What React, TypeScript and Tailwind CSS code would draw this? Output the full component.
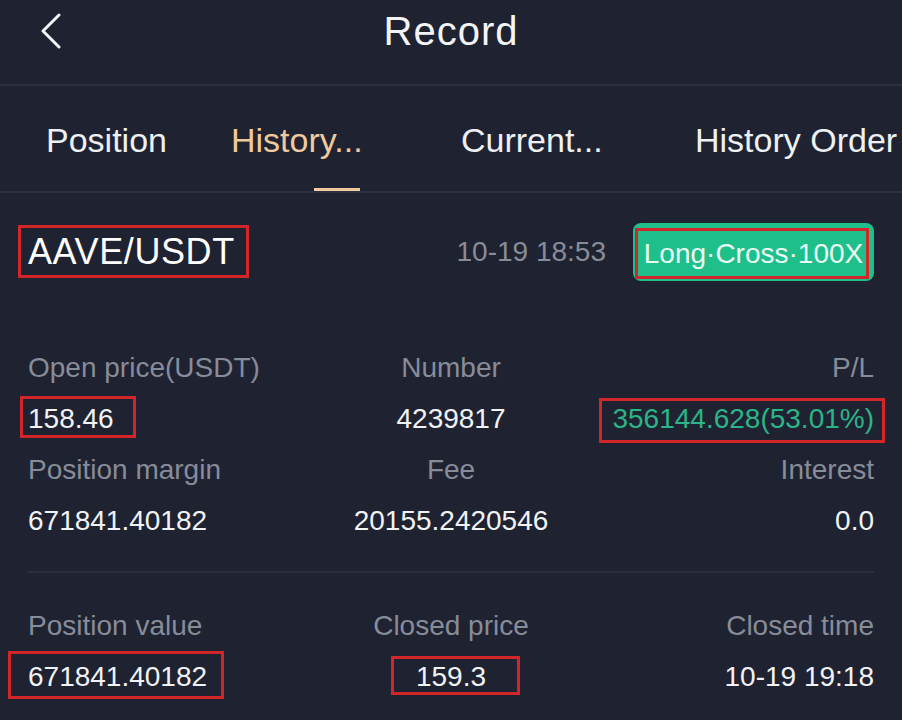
import React from 'react';

const FONT = { fontFamily: "'Liberation Sans', Arial, sans-serif" };

type Mark = { l: number; r: number; t: number; b: number };

// red annotation frame drawn over a piece of text
const Marked: React.FC<{ mark?: Mark; children: React.ReactNode }> = ({ mark, children }) => (
  <span className="relative inline-block leading-[32px] align-middle">
    {children}
    {mark && (
      <span
        className="absolute border-[3px] border-[#d3262b] pointer-events-none"
        style={{ left: -mark.l, right: -mark.r, top: -mark.t, bottom: -mark.b }}
      />
    )}
  </span>
);

type Cell = { label: string; value: string; tone?: 'green'; mark?: Mark };

const ROWS: Cell[][] = [
  [
    { label: 'Open price(USDT)', value: '158.46', mark: { l: 8, r: 22, t: 7, b: 3 } },
    { label: 'Number', value: '4239817' },
    { label: 'P/L', value: '356144.628(53.01%)', tone: 'green', mark: { l: 13, r: 11, t: 5, b: 8 } },
  ],
  [
    { label: 'Position margin', value: '671841.40182' },
    { label: 'Fee', value: '20155.2420546' },
    { label: 'Interest', value: '0.0' },
  ],
];

const LAST_ROW: Cell[] = [
  { label: 'Position value', value: '671841.40182', mark: { l: 20, r: 17, t: 10, b: 6 } },
  { label: 'Closed price', value: '159.3', mark: { l: 25, r: 34, t: 5, b: 2 } },
  { label: 'Closed time', value: '10-19 19:18' },
];

const Grid: React.FC<{ cells: Cell[] }> = ({ cells }) => (
  <div className="grid grid-cols-3">
    {cells.map((c, i) => {
      const align = i === 0 ? 'text-left' : i === 1 ? 'text-center' : 'text-right';
      return (
        <div key={c.label} className={align}>
          <div className="h-[51px] leading-[51px] text-[28px] text-[#878c99]">{c.label}</div>
          <div
            className={`h-[51px] flex items-center ${i === 0 ? 'justify-start' : i === 1 ? 'justify-center' : 'justify-end'} text-[28px] ${
              c.tone === 'green' ? 'text-[#2bb487]' : 'text-[#f1f2f4]'
            }`}
          >
            <Marked mark={c.mark}>{c.value}</Marked>
          </div>
        </div>
      );
    })}
  </div>
);

const TABS = [
  { name: 'Position', w: 'w-[185px]' },
  { name: 'History...', w: 'w-[230px]', active: true },
  { name: 'Current...', w: 'w-[234px]' },
  { name: 'History Order', w: 'w-[230px]' },
];

export default function App() {
  return (
    <div className="w-[902px] h-[720px] overflow-hidden bg-[#1f2231] text-white" style={FONT}>
      {/* header */}
      <header className="relative h-[86px] flex items-center justify-center border-b-2 border-[#2b2f3f]">
        <button className="absolute left-[40px] top-[13px] p-0">
          <svg width="22" height="36" viewBox="0 0 22 36" fill="none">
            <path d="M19 2 L3 18 L19 34" stroke="#f3f4f6" strokeWidth="3" strokeLinecap="round" strokeLinejoin="round" />
          </svg>
        </button>
        <h1 className="-mt-[22px] text-[40px] font-normal tracking-[1px] text-[#f3f4f6]">Record</h1>
      </header>

      {/* tabs */}
      <nav className="h-[107px] flex pl-[46px] border-b-2 border-[#2b2f3f] whitespace-nowrap">
        {TABS.map((t) => (
          <div key={t.name} className={`${t.w} shrink-0 flex flex-col`}>
            <div className={`pt-[33px] h-[104px] text-[34px] leading-[42px] ${t.active ? 'text-[#f0c99c]' : 'text-[#eef0f3]'}`}>
              {t.name}
            </div>
            {t.active && <div className="ml-[83px] w-[46px] h-[3px] bg-[#f0c99c]" />}
          </div>
        ))}
      </nav>

      {/* record card */}
      <section className="px-[28px] pt-[30px]">
        <div className="flex items-center h-[58px]">
          <span className="relative inline-block">
            <span className="block text-[36px] leading-[30px] tracking-[0.6px] text-white">AAVE/USDT</span>
            <span className="absolute -left-[10px] -right-[14px] -top-[12px] -bottom-[11px] border-[3px] border-[#d3262b]" />
          </span>
          <span className="ml-auto text-[28px] text-[#878c99]">10-19 18:53</span>
          <span className="ml-[27px] h-[58px] w-[241px] rounded-lg bg-[#1fbf8b] flex items-center justify-center pt-[4px]">
            <span className="relative inline-block">
              <span className="block text-[28px] leading-[32px] text-[#e9fbf2]">Long·Cross·100X</span>
              <span className="absolute -left-[9px] -right-[6px] -top-[10px] -bottom-[9px] border-[3px] border-[#d3262b]" />
            </span>
          </span>
        </div>

        <div className="mt-[61px] flex flex-col">
          {ROWS.map((r, i) => (
            <Grid key={i} cells={r} />
          ))}
        </div>

        <div className="mt-[25px] h-[2px] bg-[#2a2e3d]" />

        <div className="mt-[27px]">
          <Grid cells={LAST_ROW} />
        </div>
      </section>
    </div>
  );
}
